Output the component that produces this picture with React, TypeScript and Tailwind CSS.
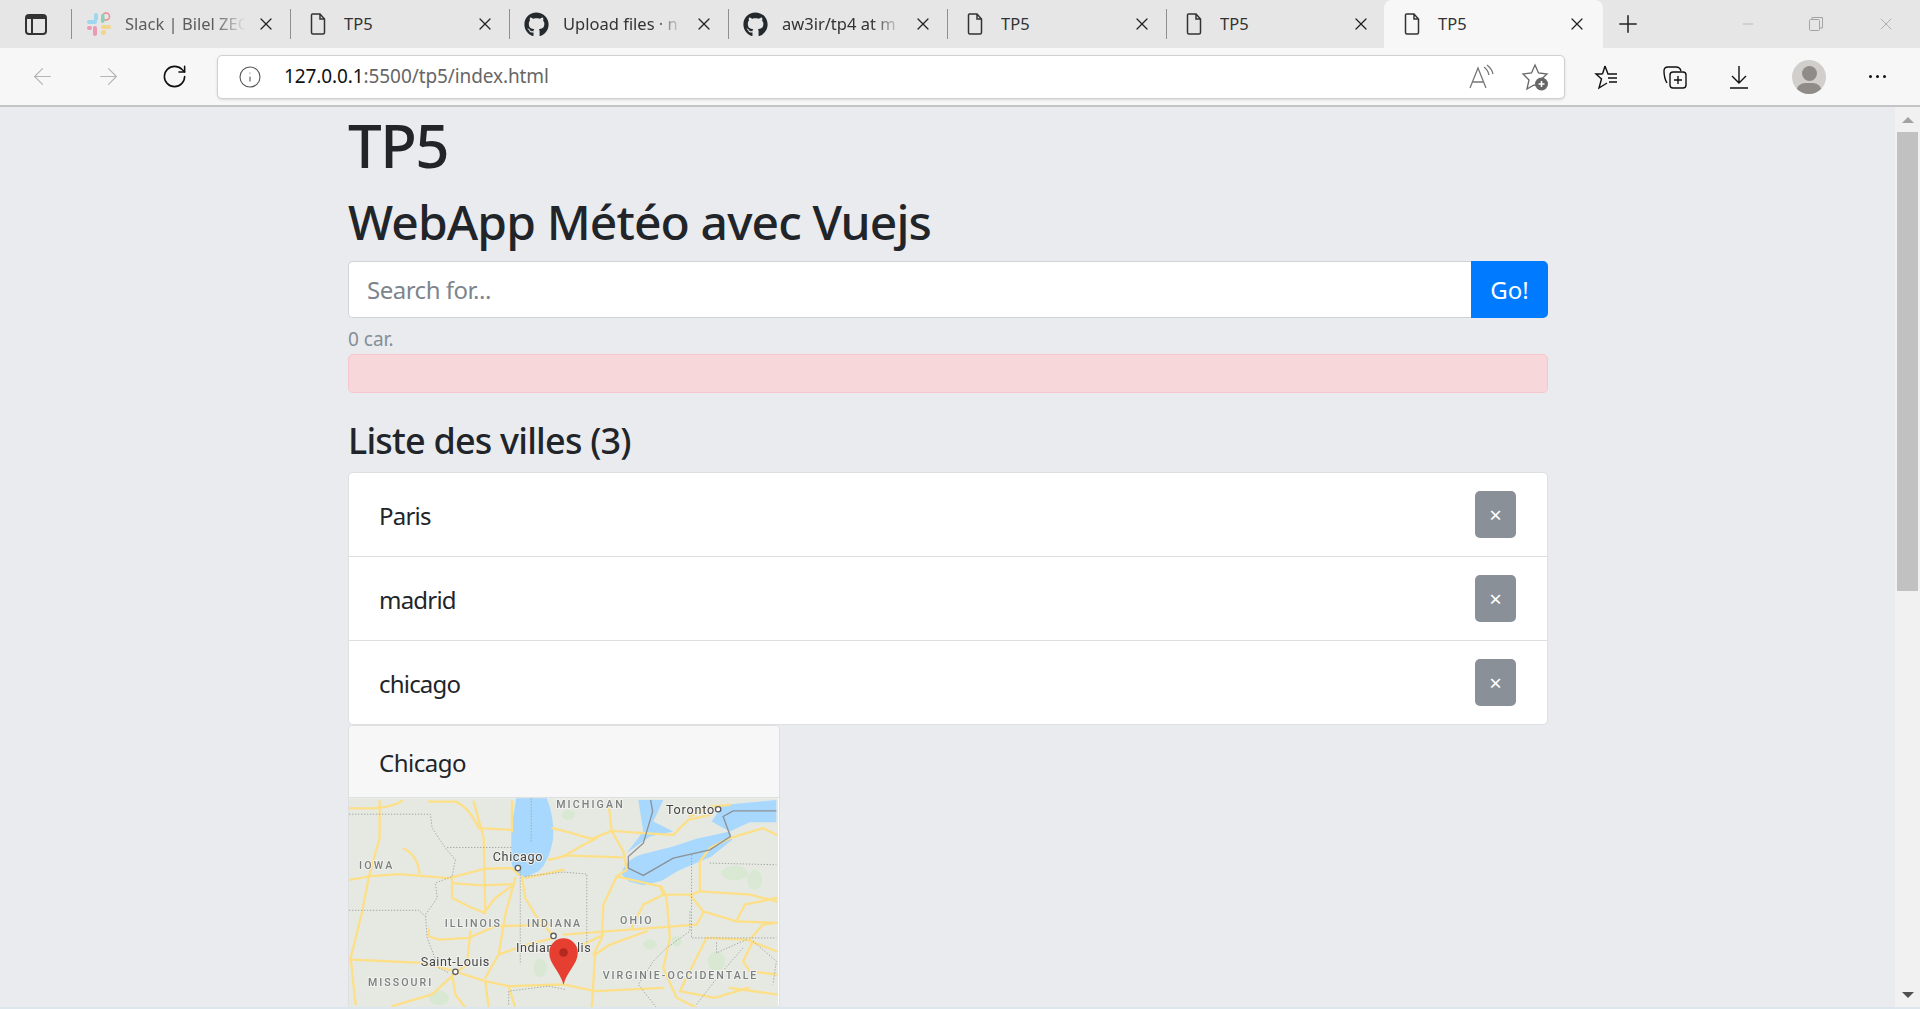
import { ArrowLeft, ArrowRight, Info, Minus, Plus, RotateCw, X } from "lucide-react";
import { FaGithub } from "react-icons/fa";

const roads = [
  "M0 30 Q60 32 90 28 Q130 25 160 8",
  "M240 10 L320 10 Q360 25 390 90 L490 95",
  "M92 8 L92 120 L60 235 L40 340 L5 480 L20 620",
  "M0 245 Q40 240 60 235 L150 228 L300 240 L410 212 L490 210 L510 230",
  "M165 152 Q205 170 212 225",
  "M310 240 L310 300 L370 330 L410 345 L405 120 L375 10",
  "M310 255 L400 262 L490 258",
  "M520 235 L530 300 L560 350 L615 415",
  "M500 240 L470 350 L450 470 L410 540",
  "M405 345 L440 300 L495 260",
  "M240 395 L240 415 L270 425 L360 420 L440 385 L610 380",
  "M365 400 L355 500 L320 525",
  "M0 485 L220 495 L300 515 L410 550 L480 565 L640 560",
  "M320 525 L250 590 L130 625",
  "M450 470 L520 445 L615 420",
  "M490 100 L490 10",
  "M612 90 L645 98",
  "M600 185 L645 175",
  "M530 240 L600 225 L645 215",
  "M410 550 L420 630",
  "M310 530 L320 590 L350 630",
  "M480 565 L500 630",
  "M645 98 L730 122 L790 98 L885 105 L975 110 L1020 65 L1085 50",
  "M780 10 L790 98 L825 160 L835 215 L805 235 L765 320 L760 420 L735 470",
  "M645 175 L705 140 L745 120",
  "M645 172 L820 178",
  "M805 235 L935 265 L945 290 L1025 290 L1065 340 L1165 370 L1285 375",
  "M645 410 L845 395 L1045 380 L1065 345",
  "M705 440 L765 410",
  "M940 265 L955 300 L965 420 L945 510 L985 600 L1045 630",
  "M945 290 L885 320 L850 390",
  "M1030 290 L1055 280 L1205 290 L1285 310",
  "M1055 280 L1055 190 L1085 150 L1145 120 L1245 90 L1285 110",
  "M1075 420 L1195 425 L1285 460",
  "M1075 420 L1035 500 L995 580",
  "M1165 370 L1190 320 L1285 300",
  "M740 470 L730 630",
  "M740 470 L785 440 L895 400",
  "M645 560 L740 580 L945 570",
  "M1205 425 L1245 380 L1285 375",
  "M1215 430 L1185 490 L1205 520 L1285 530",
  "M1025 55 L1085 25 L1145 20",
  "M1145 570 L1285 590",
  "M995 580 L1100 600 L1200 570",
];

const borders = [
  "M0 48 L245 48 L250 90 L290 150 L320 185 L310 235 L260 255 L265 300 L230 350 L235 420 L270 510 L300 525",
  "M0 337 L210 337 L230 355",
  "M295 148 L490 148",
  "M548 0 L548 130",
  "M515 220 L515 500",
  "M530 235 L645 222 L715 228 L715 440",
  "M480 620 L480 580 L600 565 L650 575",
  "M1030 170 L1030 420 L1285 420",
  "M1085 195 L1285 200",
  "M1025 340 L1025 400 L955 450 L915 490 L870 560 L925 630",
  "M1195 425 L1105 465 L1105 430",
  "M1215 430 L1285 490 L1275 560",
  "M1185 450 L1115 530 L1045 620",
];

const labels = [
  { t: "IOWA", x: 30, y: 212, w: 100 },
  { t: "ILLINOIS", x: 288, y: 388, w: 166 },
  { t: "INDIANA", x: 535, y: 388, w: 160 },
  { t: "MISSOURI", x: 57, y: 565, w: 190 },
  { t: "MICHIGAN", x: 623, y: 28, w: 200 },
  { t: "OHIO", x: 815, y: 378, w: 95 },
  { t: "VIRGINIE-OCCIDENTALE", x: 763, y: 545, w: 462 },
];

const cities = [
  { t: "Chicago", x: 432, y: 190, w: 150, cx: 508, cy: 210 },
  { t: "Saint-Louis", x: 216, y: 503, w: 206, cx: 320, cy: 522 },
  { t: "Indianapolis", x: 502, y: 462, w: 225, cx: 615, cy: 414 },
  { t: "Toronto", x: 953, y: 48, w: 145, cx: 1110, cy: 33 },
];

function MapPicture() {
  return (
    <svg viewBox="0 0 1290 630" className="block w-[429px] h-[210px] blur-[0.4px]">
      <rect width="1290" height="630" fill="#e5e9e2" />
      <ellipse cx="1160" cy="225" rx="40" ry="22" fill="#d8e8d2" />
      <ellipse cx="1220" cy="245" rx="22" ry="30" fill="#d8e8d2" />
      <ellipse cx="1105" cy="490" rx="26" ry="30" fill="#d8e8d2" />
      <ellipse cx="905" cy="440" rx="20" ry="15" fill="#d8e8d2" />
      <ellipse cx="985" cy="430" rx="15" ry="16" fill="#d8e8d2" />
      <ellipse cx="270" cy="600" rx="30" ry="22" fill="#d8e8d2" />
      <ellipse cx="575" cy="510" rx="20" ry="28" fill="#d8e8d2" />
      <ellipse cx="660" cy="50" rx="20" ry="15" fill="#d8e8d2" />
      <g fill="#a8d8fd">
        <path d="M503 0 L595 0 Q618 60 614 120 Q604 185 572 218 L530 238 L508 228 Q492 215 488 190 L488 90 Z" />
        <path d="M818 228 Q835 180 885 168 L975 145 L1045 122 L1145 100 L1152 125 L1090 175 L990 218 L940 248 L885 262 L842 250 Z" />
        <path d="M870 5 L945 5 L915 70 L975 100 L905 115 L835 165 L885 100 Z" />
        <path d="M1090 70 L1125 20 L1285 5 L1285 72 L1205 72 L1145 100 Z" />
      </g>
      <g fill="none" stroke="#fddf88" strokeWidth="7" strokeLinejoin="round" strokeLinecap="round">
        {roads.map((d) => (
          <path key={d} d={d} />
        ))}
      </g>
      <g fill="none" stroke="#a3a7a3" strokeWidth="3" strokeDasharray="4 5">
        {borders.map((d) => (
          <path key={d} d={d} />
        ))}
      </g>
      <path
        d="M907 5 L913 40 L885 135 L840 175 L840 210 L885 232 L975 180 L1085 155 L1147 115 L1125 55 L1155 38 L1285 38"
        fill="none"
        stroke="#8c9196"
        strokeWidth="4"
      />
      <g className="font-['Roboto',sans-serif]">
        {labels.map((l) => (
          <text
            key={l.t}
            x={l.x}
            y={l.y}
            fontSize="32"
            fontWeight="500"
            textLength={l.w}
            fill="#7c7f80"
            stroke="#f1f2ee"
            strokeWidth="6"
            paintOrder="stroke"
          >
            {l.t}
          </text>
        ))}
        {cities.map((c) => (
          <g key={c.t}>
            <text
              x={c.x}
              y={c.y}
              fontSize="38"
              textLength={c.w}
              fill="#444"
              stroke="#f1f2ee"
              strokeWidth="6"
              paintOrder="stroke"
            >
              {c.t}
            </text>
            <circle cx={c.cx} cy={c.cy} r="8" fill="#fff" stroke="#5c5c5c" strokeWidth="4" />
          </g>
        ))}
      </g>
      <path d="M645 561 C635 520 602 500 602 464 A43 43 0 1 1 688 464 C688 500 655 520 645 561 Z" fill="#e63e30" />
      <circle cx="645" cy="464" r="13" fill="#b3291f" />
    </svg>
  );
}

function PageIcon() {
  return (
    <svg viewBox="0 0 20 24" className="w-[20px] h-[24px]" fill="none" stroke="#333" strokeWidth="1.5">
      <path d="M4.5 2 H12 L16.5 7 V20.5 Q16.5 22 15 22 H5 Q3.5 22 3.5 20.5 V3 Q3.5 2 4.5 2 Z M12 2 V7 H16.5" />
    </svg>
  );
}

function SlackIcon() {
  return (
    <svg viewBox="0 0 26 26" className="w-[26px] h-[26px]">
      <rect x="1" y="9" width="10" height="4" rx="2" fill="#9fd8ee" />
      <rect x="8" y="2" width="4" height="8" rx="2" fill="#9fd8ee" />
      <circle cx="20" cy="5.500" r="3.500" fill="none" stroke="#e78d92" strokeWidth="1.500" />
      <rect x="15" y="3" width="3.500" height="9" rx="1.700" fill="#8fd0b5" />
      <rect x="15" y="14" width="10" height="4" rx="2" fill="#f1d68e" />
      <rect x="15" y="19" width="5" height="5" rx="2" fill="#f1d68e" />
      <rect x="7" y="15" width="4" height="10" rx="2" fill="#eb9ab5" />
      <rect x="1" y="15" width="5" height="4" rx="2" fill="#eb9ab5" />
    </svg>
  );
}

const tabs = [
  { title: "Slack | Bilel ZEG", icon: "slack", fade: true, gray: true },
  { title: "TP5", icon: "page" },
  { title: "Upload files · n", icon: "github", fade: true },
  { title: "aw3ir/tp4 at m", icon: "github", fade: true },
  { title: "TP5", icon: "page" },
  { title: "TP5", icon: "page" },
];

function TabIcon({ icon }: { icon?: string }) {
  if (icon == "slack") return <SlackIcon />;
  if (icon == "github") return <FaGithub size={25} color="#24292e" />;
  return <PageIcon />;
}

function Tab({ tab }: { tab: any }) {
  return (
    <div className="w-[219px] h-[48px] flex items-center shrink-0 relative">
      <div className="w-[1px] h-[30px] bg-[#8f8f8f] shrink-0" />
      <div className="w-[53px] flex justify-center shrink-0">
        <TabIcon icon={tab.icon} />
      </div>
      <div
        className={`w-[127px] whitespace-nowrap overflow-hidden text-[16.500px] ${
          tab.gray ? "text-[#5c5c5c]" : "text-[#333]"
        } ${tab.fade ? "[mask-image:linear-gradient(to_right,black_70%,transparent_95%)]" : ""}`}
      >
        {tab.title}
      </div>
      <X size={20} strokeWidth={1.500} color="#222" className="ml-[4px] shrink-0" />
    </div>
  );
}

function TabStrip() {
  return (
    <div className="h-[48px] bg-[#e6e6e6] flex shrink-0">
      <div className="w-[71px] flex items-center pl-[25px] shrink-0">
        <div className="w-[22px] h-[21px] border-2 border-[#333] rounded-[4px] border-t-[5px] relative">
          <div className="absolute left-[4px] top-0 bottom-0 w-[1.500px] bg-[#333]" />
        </div>
      </div>
      {tabs.map((tab, i) => (
        <Tab key={i} tab={tab} />
      ))}
      <div className="w-[219px] h-[48px] mt-0 flex items-center bg-[#f7f7f7] rounded-t-[8px] shrink-0 -ml-[1px]">
        <div className="w-[53px] flex justify-center shrink-0 ml-[1px]">
          <PageIcon />
        </div>
        <div className="w-[125px] text-[16.500px] text-[#333]">TP5</div>
        <X size={20} strokeWidth={1.500} color="#222" className="ml-[4px]" />
      </div>
      <div className="flex items-center ml-[11px]">
        <Plus size={28} strokeWidth={1.300} color="#222" />
      </div>
      <div className="flex items-center ml-[98px] gap-[52px]">
        <Minus size={16} strokeWidth={1} color="#a3a3a3" />
        <svg viewBox="0 0 16 16" className="w-[16px] h-[16px]" fill="none" stroke="#a3a3a3">
          <rect x="1.500" y="3.500" width="10" height="11" rx="1" />
          <path d="M4 3.500 V1.500 H14.500 V12 H11.500" />
        </svg>
        <X size={20} strokeWidth={1} color="#a3a3a3" />
      </div>
    </div>
  );
}

function ToolbarButton({ children }: { children: React.ReactNode }) {
  return <div className="w-[66px] h-[44px] flex items-center justify-center shrink-0">{children}</div>;
}

function Toolbar() {
  return (
    <div className="h-[59px] bg-[#f7f7f7] border-b-2 border-[#c4c4c4] flex items-center shrink-0 pl-[9px]">
      <ToolbarButton>
        <ArrowLeft size={27} strokeWidth={1} color="#b5b5b5" />
      </ToolbarButton>
      <ToolbarButton>
        <ArrowRight size={27} strokeWidth={1} color="#b5b5b5" />
      </ToolbarButton>
      <ToolbarButton>
        <RotateCw size={27} strokeWidth={1.400} color="#111" />
      </ToolbarButton>
      <div className="ml-[10px] w-[1348px] h-[44px] bg-white border border-[#d0d0d0] rounded-[5px] shadow-sm flex items-center pl-[20px] shrink-0">
        <Info size={24} strokeWidth={1.100} color="#555" />
        <div className="ml-[22px] text-[19px] text-[#666] tracking-[-0.100px]">
          <span className="text-[#111]">127.0.0.1</span>:5500/tp5/index.html
        </div>
        <svg viewBox="0 0 28 28" className="w-[28px] h-[28px] ml-auto" fill="none" stroke="#777" strokeWidth="1.300">
          <path d="M3 25 L11 5 L19 25 M6 19 H16" />
          <path d="M17 4 Q21 7 22 12 M20 2 Q25 6 26 11" />
        </svg>
        <svg viewBox="0 0 30 30" className="w-[30px] h-[30px] ml-[25px] mr-[14px]">
          <path d="M15 3 L18.500 11 L27 12 L20.500 18 L22 26 L14 23 L7 27 L9 18 L3 12 L11.500 11 Z" fill="none" stroke="#666" strokeWidth="1.300" />
          <circle cx="21.500" cy="22" r="6.500" fill="#666" />
          <path d="M21.500 19 V25 M18.500 22 H24.500" stroke="#fff" strokeWidth="1.500" />
        </svg>
      </div>
      <div className="ml-[9px]">
        <ToolbarButton>
          <svg viewBox="0 0 28 28" className="w-[28px] h-[28px]" fill="none" stroke="#111" strokeWidth="1.400">
            <path d="M12 3 L15 11 H24 M9.500 11 H3 L8.500 16 L6 25 L14 20 M15 15 H24 M16 19 H24" />
            <path d="M12 3 L9.500 11" />
          </svg>
        </ToolbarButton>
      </div>
      <ToolbarButton>
        <svg viewBox="0 0 28 28" className="w-[28px] h-[28px] ml-[4px]" fill="none" stroke="#111" strokeWidth="1.400">
          <rect x="9" y="9" width="16" height="16" rx="3" />
          <path d="M17 13 V21 M13 17 H21" />
          <path d="M6 20 Q3 15 3 8 Q3 4 7 4 H15 Q19 4 20 8" />
        </svg>
      </ToolbarButton>
      <ToolbarButton>
        <svg viewBox="0 0 28 28" className="w-[28px] h-[28px]" fill="none" stroke="#111" strokeWidth="1.400">
          <path d="M14 3 V20 M7 13 L14 20 L21 13 M5 25 H23" />
        </svg>
      </ToolbarButton>
      <div className="w-[34px] h-[34px] rounded-full bg-[#d0cfcc] ml-[20px] overflow-hidden relative shrink-0">
        <div className="w-[15px] h-[15px] rounded-full bg-[#8f8c88] absolute top-[6px] left-[9.500px]" />
        <div className="w-[26px] h-[18px] rounded-full bg-[#8f8c88] absolute top-[23px] left-[4px]" />
      </div>
      <div className="flex gap-[4px] ml-[43px]">
        <div className="w-[3px] h-[3px] rounded-full bg-[#111]" />
        <div className="w-[3px] h-[3px] rounded-full bg-[#111]" />
        <div className="w-[3px] h-[3px] rounded-full bg-[#111]" />
      </div>
    </div>
  );
}

function CityRow({ name, last }: { name: string; last?: boolean }) {
  return (
    <div
      className={`flex items-center justify-between pl-[30px] pr-[31px] ${
        last ? "h-[83px]" : "h-[84px] border-b-[1.500px] border-[#dedfe0]"
      }`}
    >
      <span className="tracking-[-0.800px] pt-[2px]">{name}</span>
      <button className="w-[41px] h-[47px] bg-[#899097] rounded-[5px] text-white text-[22px] flex items-center justify-center">
        ×
      </button>
    </div>
  );
}

function Scrollbar() {
  return (
    <div className="w-[25px] bg-[#f1f1f1] shrink-0 flex flex-col items-center overflow-hidden">
      <div className="mt-[10px] w-0 h-0 border-x-[6px] border-x-transparent border-b-[6px] border-b-[#a3a3a3]" />
      <div className="mt-[9px] w-[21px] h-[459px] bg-[#c1c1c1]" />
      <div className="mt-auto mb-[9px] w-0 h-0 border-x-[6px] border-x-transparent border-t-[6px] border-t-[#505050]" />
    </div>
  );
}

function App() {
  return (
    <div className="h-screen w-full flex flex-col overflow-hidden bg-[#e9ebef] font-['Noto_Sans',sans-serif]">
      <TabStrip />
      <Toolbar />
      <div className="flex-1 min-h-0 flex">
        <div className="flex-1 min-w-0 overflow-hidden">
          <div className="w-[1200px] ml-[348px] text-[24px] text-[#212529]">
            <h1 className="text-[60px] leading-[72px] font-medium tracking-[-1.500px] mt-[2px]">TP5</h1>
            <h2 className="text-[48px] leading-[58px] font-medium tracking-[-0.900px] mt-[12px]">WebApp Météo avec Vuejs</h2>
            <div className="flex h-[57px] mt-[10px]">
              <div className="flex-1 bg-white border-[1.500px] border-r-0 border-[#ced4da] rounded-l-[5px] flex items-center pl-[18px] text-[#7d858c] tracking-[-0.500px]">
                Search for...
              </div>
              <button className="w-[77px] bg-[#007bff] text-white rounded-r-[5px]">Go!</button>
            </div>
            <div className="text-[19px] leading-[27px] text-[#868e96] mt-[8px]">0 car.</div>
            <div className="h-[39px] bg-[#f8d7da] border-[1.500px] border-[#f5c6cb] rounded-[5px] mt-[1px]" />
            <h3 className="text-[36px] leading-[44px] font-medium tracking-[-0.800px] mt-[26px]">Liste des villes (3)</h3>
            <div className="bg-white border-[1.500px] border-[#dedfe0] rounded-[5px] mt-[9px]">
              <CityRow name="Paris" />
              <CityRow name="madrid" />
              <CityRow name="chicago" last />
            </div>
            <div className="w-[432px] border-[1.500px] border-[#dedfe0] rounded-[5px] overflow-hidden bg-white">
              <div className="h-[72px] bg-[#f7f7f7] border-b-[1.500px] border-[#dedfe0] flex items-center pl-[30px] pt-[3px] tracking-[-0.500px]">
                Chicago
              </div>
              <MapPicture />
            </div>
          </div>
        </div>
        <Scrollbar />
      </div>
      <div className="h-[2px] bg-[#dde6ec] shrink-0" />
    </div>
  );
}

export default App;
